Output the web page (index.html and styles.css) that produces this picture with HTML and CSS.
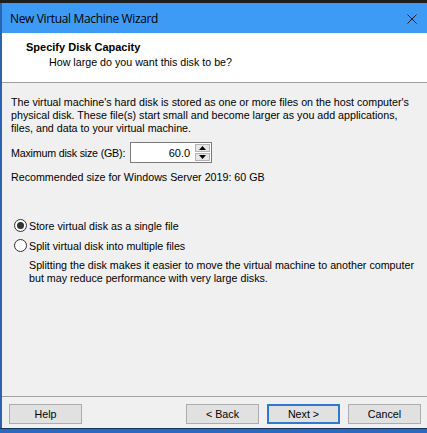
FILE: index.html
```html
<!DOCTYPE html>
<html>
<head>
<meta charset="utf-8">
<link rel="stylesheet" href="styles.css">
</head>
<body>
<div class="frame">
  <div class="topstrip"></div>
  <div class="window">
    <div class="titlebar">
      <span class="title">New Virtual Machine Wizard</span>
      <svg class="close" width="10" height="10" viewBox="0 0 10 10"><path d="M0.5 0.5 L9.5 9.5 M9.5 0.5 L0.5 9.5" stroke="#1a1a1a" stroke-width="1" fill="none"/></svg>
    </div>
    <div class="header">
      <div class="h-title">Specify Disk Capacity</div>
      <div class="h-sub">How large do you want this disk to be?</div>
    </div>
    <div class="content">
      <p class="desc">The virtual machine's hard disk is stored as one or more files on the host computer's physical disk. These file(s) start small and become larger as you add applications, files, and data to your virtual machine.</p>
      <div class="size-row">
        <span class="size-label">Maximum disk size (GB):</span>
        <div class="spin">
          <span class="spin-val">60.0</span>
          <div class="spin-btns">
            <div class="spin-btn"><svg width="7" height="4" viewBox="0 0 7 4"><path d="M3.5 0 L7 4 L0 4 Z" fill="#000"/></svg></div>
            <div class="spin-btn"><svg width="7" height="4" viewBox="0 0 7 4"><path d="M0 0 L7 0 L3.5 4 Z" fill="#000"/></svg></div>
          </div>
        </div>
      </div>
      <p class="rec">Recommended size for Windows Server 2019: 60 GB</p>
      <div class="options">
        <div class="opt"><span class="radio checked"></span><span>Store virtual disk as a single file</span></div>
        <div class="opt"><span class="radio"></span><span>Split virtual disk into multiple files</span></div>
      </div>
      <p class="note">Splitting the disk makes it easier to move the virtual machine to another computer but may reduce performance with very large disks.</p>
    </div>
    <div class="footer">
      <div class="btn">Help</div>
      <div class="spacer"></div>
      <div class="btn">&lt; Back</div>
      <div class="btn default">Next &gt;</div>
      <div class="btn">Cancel</div>
    </div>
  </div>
  <div class="bottomstrip"></div>
</div>
</body>
</html>
```
FILE: styles.css
```css
* { box-sizing: border-box; }
html, body { margin: 0; padding: 0; }
body {
  width: 427px;
  height: 433px;
  overflow: hidden;
  font-family: "Liberation Sans", Arial, sans-serif;
  font-size: 10.7px;
  color: #000;
  background: #f0f0f0;
}
.frame {
  display: flex;
  flex-direction: column;
  height: 433px;
}
.topstrip {
  height: 3px;
  background: #1e1e1e;
}
.window {
  height: 425px;
  display: flex;
  flex-direction: column;
  border-left: 2px solid #2c63ae;
  background: #f0f0f0;
}
.titlebar {
  height: 30px;
  background: #3d9bf5;
  display: flex;
  align-items: center;
  padding-left: 8px;
  padding-right: 9px;
}
.title {
  font-family: "Open Sans", "Noto Sans", sans-serif;
  font-size: 12px;
  color: #000;
  flex: 1;
  letter-spacing: -0.35px;
}
.close { display: block; margin-top: 1px; margin-right: 1px; }
.header {
  height: 50px;
  background: #fff;
  border-bottom: 1px solid #a0a0a0;
  padding: 7px 0 0 24px;
}
.h-title {
  font-weight: bold;
  line-height: 14px;
  font-size: 11px;
}
.h-sub {
  line-height: 14px;
  margin-top: 1px;
  padding-left: 23px;
}
.content {
  flex: 1;
  padding: 13px 6px 0 9px;
}
.desc {
  margin: 0;
  line-height: 13px;
}
.size-row {
  display: flex;
  align-items: center;
  gap: 5px;
  margin-top: 7px;
  height: 21px;
}
.size-label {
  white-space: nowrap;
  letter-spacing: -0.2px;
  flex-shrink: 0;
}
.spin {
  width: 82px;
  height: 21px;
  border: 1px solid #7a7a7a;
  background: #fff;
  display: flex;
  align-items: center;
}
.spin-val {
  flex: 1;
  text-align: right;
  padding-right: 5px;
  font-size: 11px;
}
.spin-btns {
  width: 16px;
  height: 19px;
  display: flex;
  flex-direction: column;
  gap: 1px;
  padding: 1px 1px 1px 0;
}
.spin-btn {
  flex: 1;
  background: #e6e6e6;
  border: 1px solid #b4b4b4;
  display: flex;
  align-items: center;
  justify-content: center;
}
.spin-btn svg { display: block; }
.rec {
  margin: 8px 0 0;
  line-height: 13px;
}
.options {
  margin-top: 33px;
  display: flex;
  flex-direction: column;
  gap: 3px;
}
.opt {
  display: flex;
  align-items: center;
  height: 17px;
  gap: 2px;
}
.radio {
  width: 13px;
  height: 13px;
  margin-left: 3px;
  border: 1px solid #333;
  border-radius: 50%;
  background: #fff;
  display: flex;
  align-items: center;
  justify-content: center;
}
.radio.checked::after {
  content: "";
  width: 7px;
  height: 7px;
  border-radius: 50%;
  background: #333;
}
.note {
  margin: 5px 0 0 18px;
  line-height: 13px;
}
.footer {
  height: 32px;
  border-top: 1px solid #a0a0a0;
  display: flex;
  gap: 8px;
  padding: 7px 6px 4px 7px;
}
.spacer { flex: 1; }
.btn {
  width: 73px;
  height: 20px;
  background: #e1e1e1;
  border: 1px solid #adadad;
  display: flex;
  align-items: center;
  justify-content: center;
}
.btn.default {
  border: 2px solid #2e7ad1;
}
.bottomstrip {
  height: 5px;
  border-top: 1px solid #17365f;
  background: #2a69bd;
}
```
